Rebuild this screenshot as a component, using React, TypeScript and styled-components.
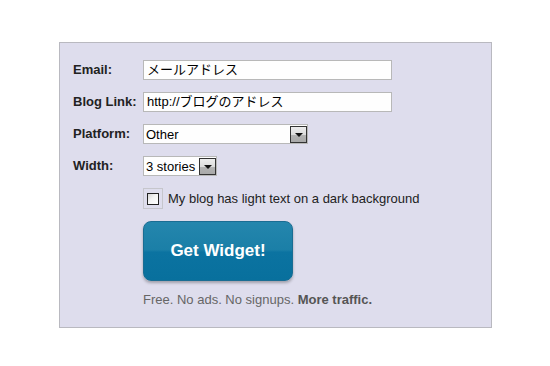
import styled, {createGlobalStyle} from "styled-components";

const GlobalStyle = createGlobalStyle`
  html, body {
    margin: 0;
    padding: 0;
    background: #ffffff;
  }
  body {
    width: 550px;
    height: 366px;
    overflow: hidden;
    font-family: "Liberation Sans", Arial, "Noto Sans CJK JP", sans-serif;
  }
`

const Page = styled.div`
  padding: 42px 0 0 59px;
`

const Panel = styled.div`
  box-sizing: border-box;
  width: 433px;
  height: 286px;
  background: #dedded;
  border: 1px solid #b9b9c0;
  padding: 17px 0 0 13px;
`

const Form = styled.div`
  display: grid;
  grid-template-columns: 70px auto;
  row-gap: 12px;
  align-items: center;
  justify-items: start;
`

const Label = styled.label`
  font-size: 13px;
  font-weight: bold;
  color: #222;
  line-height: 20px;
`

const TextField = styled.div<{ $width: number }>`
  box-sizing: border-box;
  width: ${p => p.$width}px;
  height: 20px;
  background: #fefefe;
  border: 1px solid #b8b8b8;
  padding: 0 3px;
  font-size: 13px;
  line-height: 18px;
  color: #000;
  font-family: "Liberation Sans", Arial, "Noto Sans CJK JP", sans-serif;
  white-space: nowrap;
  overflow: hidden;
`

const SelectBox = styled.div<{ $width: number }>`
  box-sizing: border-box;
  display: flex;
  align-items: center;
  justify-content: space-between;
  width: ${p => p.$width}px;
  height: 20px;
  background: #fefefe;
  border: 1px solid #b8b8b8;
  padding: 0 0 0 2px;
  font-size: 13px;
  color: #000;
`

const ArrowButton = styled.span`
  box-sizing: border-box;
  display: flex;
  align-items: center;
  justify-content: center;
  width: 17px;
  height: 17px;
  margin-right: 0;
  border: 1px solid #333;
  background: linear-gradient(#ededed 0%, #dcdcdc 50%, #b3b3b3 51%, #a9a9a9 100%);

  &::after {
    content: "";
    border-left: 4px solid transparent;
    border-right: 4px solid transparent;
    border-top: 4px solid #111;
    margin-top: 1px;
  }
`

const Spacer = styled.span``

const CheckRow = styled.div`
  display: flex;
  align-items: center;
  gap: 5px;
  font-size: 13px;
  color: #222;
`

const CheckFrame = styled.span`
  box-sizing: border-box;
  display: flex;
  align-items: center;
  justify-content: center;
  width: 20px;
  height: 21px;
  border: 1px solid #c6c6cc;
`

const CheckBox = styled.span`
  box-sizing: border-box;
  width: 12px;
  height: 12px;
  background: linear-gradient(135deg, #d6d6d6 0%, #f4f4f4 45%, #ffffff 100%);
  border: 1px solid #222;
`

const WidgetButton = styled.button`
  box-sizing: border-box;
  width: 150px;
  height: 60px;
  border-radius: 8px;
  border: 1px solid #1a6d93;
  background: linear-gradient(#2486ad 0%, #1b7fa7 48%, #0b73a1 52%, #08709d 100%);
  box-shadow: 0 2px 3px rgba(0, 0, 0, 0.28);
  color: #fff;
  font-family: "Liberation Sans", Arial, sans-serif;
  font-size: 17px;
  font-weight: bold;
  cursor: pointer;
  padding: 0;
`

const Note = styled.p`
  margin: 0;
  font-size: 13px;
  color: #666;
  line-height: 14px;

  strong {
    color: #555;
  }
`

export default function App() {
  return (
    <Page>
      <GlobalStyle/>
      <Panel>
        <Form>
          <Label>Email:</Label>
          <TextField $width={249}>メールアドレス</TextField>

          <Label>Blog Link:</Label>
          <TextField $width={249}>http://ブログのアドレス</TextField>

          <Label>Platform:</Label>
          <SelectBox $width={165} role="listbox">
            Other
            <ArrowButton/>
          </SelectBox>

          <Label>Width:</Label>
          <SelectBox $width={74} role="listbox">
            3 stories
            <ArrowButton/>
          </SelectBox>

          <Spacer/>
          <CheckRow>
            <CheckFrame><CheckBox/></CheckFrame>
            My blog has light text on a dark background
          </CheckRow>

          <Spacer/>
          <WidgetButton>Get Widget!</WidgetButton>

          <Spacer/>
          <Note>Free. No ads. No signups. <strong>More traffic.</strong></Note>
        </Form>
      </Panel>
    </Page>
  )
}
